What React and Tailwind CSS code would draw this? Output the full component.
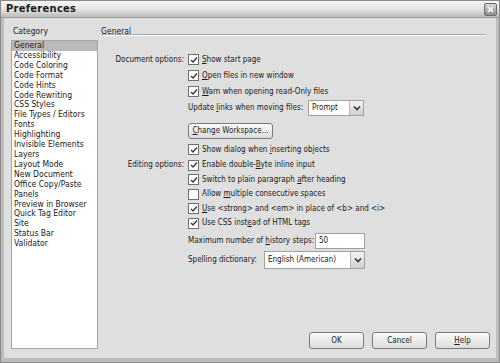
import React from "react";

const categories = [
  "General",
  "Accessibility",
  "Code Coloring",
  "Code Format",
  "Code Hints",
  "Code Rewriting",
  "CSS Styles",
  "File Types / Editors",
  "Fonts",
  "Highlighting",
  "Invisible Elements",
  "Layers",
  "Layout Mode",
  "New Document",
  "Office Copy/Paste",
  "Panels",
  "Preview in Browser",
  "Quick Tag Editor",
  "Site",
  "Status Bar",
  "Validator",
];

function U({ children }) {
  return <span className="underline underline-offset-1">{children}</span>;
}

function Check({ checked = true }) {
  return (
    <span className="w-[11px] h-[11px] border border-[#6f6f6f] bg-white flex items-center justify-center shrink-0">
      {checked && (
        <svg width="8" height="8" viewBox="0 0 8 8">
          <path d="M1 4 L3 6 L7 1.5" fill="none" stroke="#3a3a3a" strokeWidth="1.4" />
        </svg>
      )}
    </span>
  );
}

function CheckRow({ checked, children, className = "h-[15px]" }) {
  return (
    <div className={"flex items-center gap-[3px] whitespace-nowrap " + className}>
      <Check checked={checked} />
      <span>{children}</span>
    </div>
  );
}

function DropArrow() {
  return (
    <span className="w-[14px] h-full bg-gradient-to-b from-[#f4f4f4] to-[#cfcfcf] border-l border-[#b8b8b8] flex items-center justify-center">
      <svg width="8" height="6" viewBox="0 0 8 6">
        <path d="M1 1.5 L4 4.5 L7 1.5" fill="none" stroke="#333" strokeWidth="1.6" />
      </svg>
    </span>
  );
}

function Button({ children, className = "" }) {
  return (
    <div
      className={
        "border border-[#7a7a7a] rounded-[3px] bg-gradient-to-b from-[#fbfbfb] to-[#dcdcdc] flex items-center justify-center whitespace-nowrap " +
        className
      }
    >
      {children}
    </div>
  );
}

export default function App() {
  return (
    <div
      className="w-[500px] h-[363px] bg-[#dfdfdf] border border-[#8a8a8a] flex flex-col text-[8px] text-[#1a1a1a] overflow-hidden"
      style={{ fontFamily: '"DejaVu Sans Condensed", "Liberation Sans", sans-serif' }}
    >
      <div className="h-[17px] shrink-0 bg-gradient-to-b from-[#f6f6f6] via-[#e4e4e4] to-[#bdbdbd] border-b border-[#9a9a9a] flex items-center justify-between pl-[5px] pr-[2px]">
        <span className="font-bold text-[11px] tracking-[0.3px]">Preferences</span>
        <span className="w-[13px] h-[13px] bg-gradient-to-b from-[#d8d8d8] to-[#8e8e8e] border border-[#6b6b6b] rounded-[2px] flex items-center justify-center">
          <svg width="7" height="7" viewBox="0 0 7 7">
            <path d="M1 1 L6 6 M6 1 L1 6" stroke="#fff" strokeWidth="1.6" />
          </svg>
        </span>
      </div>

      <div className="flex-1 flex border-l-[3px] border-r-[3px] border-b-[4px] border-[#bdbdbd] pb-[9px]">
        <div className="ml-[7px] w-[87px] flex flex-col pt-[7px] text-[8.5px]">
          <div className="h-[15px] pl-[2px]">Category</div>
          <div className="flex-1 bg-white border border-[#a5a5a5] pl-[2px] leading-[9.9px]">
            {categories.map((c, i) => (
              <div key={c} className={i === 0 ? "bg-[#b9b9b9] -ml-[2px] pl-[2px]" : ""}>
                {c}
              </div>
            ))}
          </div>
        </div>

        <div className="flex-1 flex flex-col ml-[3px] mr-[6px] pt-[7px]">
          <div className="h-[8px] text-[8.5px]">General</div>
          <div className="mr-[5px] h-[2px] border-t border-[#a8a8a8] border-b border-b-white mt-[1px]" />

          <div className="grid grid-cols-[83px_1fr] gap-x-[4px] mt-[16px] whitespace-nowrap">
            <div className="h-[15px] flex items-center justify-end">Document options:</div>
            <div className="flex flex-col gap-[1px]">
              <CheckRow>
                <U>S</U>how start page
              </CheckRow>
              <CheckRow>
                <U>O</U>pen files in new window
              </CheckRow>
              <CheckRow>
                <U>W</U>arn when opening read-Only files
              </CheckRow>
              <div className="h-[16px] flex items-center">
                <span className="w-[120px]">
                  Update <U>l</U>inks when moving files:
                </span>
                <div className="w-[56px] h-[16px] bg-white border border-[#a0a0a0] flex items-center justify-between">
                  <span className="pl-[3px]">Prompt</span>
                  <DropArrow />
                </div>
              </div>
              <Button className="w-[85px] h-[16px] mt-[6px] mb-[2px]">
                <span>
                  <U>C</U>hange Workspace...
                </span>
              </Button>
              <CheckRow>
                Show dialog when <U>i</U>nserting objects
              </CheckRow>
            </div>

            <div className="h-[14.5px] mt-[1px] flex items-center justify-end">Editing options:</div>
            <div className="flex flex-col mt-[1px]">
              <CheckRow className="h-[14.5px]">
                Enable double-<U>B</U>yte inline input
              </CheckRow>
              <CheckRow className="h-[14.5px]">
                Switch to plain paragraph <U>a</U>fter heading
              </CheckRow>
              <CheckRow className="h-[14.5px]" checked={false}>
                Allow <U>m</U>ultiple consecutive spaces
              </CheckRow>
              <CheckRow className="h-[14.5px]">
                <U>U</U>se &lt;strong&gt; and &lt;em&gt; in place of &lt;b&gt; and &lt;i&gt;
              </CheckRow>
              <CheckRow className="h-[14.5px]">
                Use CSS inst<U>e</U>ad of HTML tags
              </CheckRow>
              <div className="h-[16px] flex items-center mt-[2px]">
                <span className="w-[127px]">
                  Maximum number of <U>h</U>istory steps:
                </span>
                <div className="w-[50px] h-[16px] bg-white border border-[#a0a0a0] flex items-center pl-[3px]">
                  50
                </div>
              </div>
              <div className="h-[18px] flex items-center mt-[2px]">
                <span className="w-[76px]">
                  Spellin<U>g</U> dictionary:
                </span>
                <div className="w-[101px] h-[18px] bg-white border border-[#a0a0a0] flex items-center justify-between">
                  <span className="pl-[3px]">English (American)</span>
                  <DropArrow />
                </div>
              </div>
            </div>
          </div>

          <div className="mt-auto flex justify-end gap-[8px]">
            <Button className="w-[55px] h-[17px]">OK</Button>
            <Button className="w-[55px] h-[17px]">Cancel</Button>
            <Button className="w-[55px] h-[17px]">
              <span>
                <U>H</U>elp
              </span>
            </Button>
          </div>
        </div>
      </div>
    </div>
  );
}
